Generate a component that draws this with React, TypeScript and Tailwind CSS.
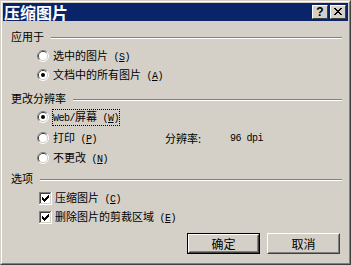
import React from 'react';

const cjk = "font-['Noto_Sans_CJK_SC',sans-serif]";
const mono = "font-['Liberation_Mono',monospace] text-[10px] tracking-[-0.5px]";

function Key({ k }: { k: string }) {
  return (
    <span className={mono}>
      {' ('}
      <span className="underline underline-offset-1">{k}</span>
      {')'}
    </span>
  );
}

function Radio({ checked }: { checked?: boolean }) {
  return (
    <svg width="12" height="12" viewBox="0 0 12 12" className="shrink-0">
      <path d="M2.11 9.89A5.5 5.5 0 0 1 9.89 2.11" fill="none" stroke="#808080" />
      <path d="M9.89 2.11A5.5 5.5 0 0 1 2.11 9.89" fill="none" stroke="#ffffff" />
      <path d="M2.82 9.18A4.5 4.5 0 0 1 9.18 2.82" fill="none" stroke="#404040" />
      <path d="M9.18 2.82A4.5 4.5 0 0 1 2.82 9.18" fill="none" stroke="#d4d0c8" />
      <circle cx="6" cy="6" r="4" fill="#ffffff" />
      {checked && <circle cx="6" cy="6" r="2" fill="#000000" />}
    </svg>
  );
}

function Check() {
  const runs = [2, 3, 4, 3, 2, 1, 0];
  return (
    <svg width="13" height="13" viewBox="0 0 13 13" className="shrink-0" shapeRendering="crispEdges">
      <rect x="0" y="0" width="13" height="13" fill="#ffffff" />
      <rect x="0" y="0" width="12" height="1" fill="#808080" />
      <rect x="0" y="0" width="1" height="12" fill="#808080" />
      <rect x="1" y="1" width="10" height="1" fill="#404040" />
      <rect x="1" y="1" width="1" height="10" fill="#404040" />
      <rect x="1" y="11" width="11" height="1" fill="#d4d0c8" />
      <rect x="11" y="1" width="1" height="11" fill="#d4d0c8" />
      <rect x="2" y="2" width="9" height="9" fill="#ffffff" />
      {runs.map((r, i) => (
        <rect key={i} x={3 + i} y={3 + r} width="1" height="3" fill="#000000" />
      ))}
    </svg>
  );
}

function Heading({ text, className }: { text: string; className?: string }) {
  return (
    <div className={`flex h-[16px] ${className ?? ''}`}>
      <span className="leading-[16px]">{text}</span>
      <div className="flex-1 ml-[7px] mt-[9px] h-[2px] border-t border-t-[#808080] border-b border-b-white" />
    </div>
  );
}

function Raised({ children, isDefault, className }: { children: React.ReactNode; isDefault?: boolean; className?: string }) {
  const inner = (
    <div className="h-full border border-t-white border-l-white border-r-[#404040] border-b-[#404040]">
      <div className="h-full border border-t-[#d4d0c8] border-l-[#d4d0c8] border-r-[#808080] border-b-[#808080] flex items-center justify-center">
        {children}
      </div>
    </div>
  );
  return (
    <div className={`${className ?? ''} ${isDefault ? 'border border-black' : ''}`}>
      {inner}
    </div>
  );
}

export default function App() {
  const xRows = [
    [0, 6], [1, 5], [2, 4], [3, 3], [2, 4], [1, 5], [0, 6],
  ];
  return (
    <div className={`w-[351px] h-[265px] border border-t-[#d4d0c8] border-l-[#d4d0c8] border-r-[#404040] border-b-[#404040] text-black ${cjk}`}>
      <div className="h-full border border-t-white border-l-white border-r-[#808080] border-b-[#808080] p-[1px] bg-[#d4d0c8] flex flex-col">
        {/* Title bar */}
        <div className="h-[18px] bg-[#0a246a] flex items-center pl-[1px] pr-[2px]">
          <span className="text-white font-bold text-[16px] leading-[18px]">压缩图片</span>
          <div className="ml-auto flex gap-[2px]">
            <div className="w-[16px] h-[14px] bg-[#d4d0c8] border border-t-white border-l-white border-r-[#404040] border-b-[#404040] flex items-center justify-center">
              <span className="font-['Liberation_Sans',sans-serif] font-bold text-[12px] leading-none">?</span>
            </div>
            <div className="w-[16px] h-[14px] bg-[#d4d0c8] border border-t-white border-l-white border-r-[#404040] border-b-[#404040]">
              <svg width="14" height="12" viewBox="0 0 14 12" shapeRendering="crispEdges">
                {xRows.map(([a, b], i) => (
                  <g key={i}>
                    <rect x={3 + a} y={2 + i} width="2" height="1" fill="#000" />
                    <rect x={3 + b} y={2 + i} width="2" height="1" fill="#000" />
                  </g>
                ))}
              </svg>
            </div>
          </div>
        </div>

        {/* Body */}
        <div className="flex-1 flex flex-col pl-[8px] pr-[6px] text-[11px]">
          <Heading text="应用于" className="mt-[7px]" />
          <div className="flex items-center h-[16px] mt-[4px] pl-[26px]">
            <Radio />
            <span className="ml-[3px] border border-transparent leading-[12px]">选中的图片<Key k="S" /></span>
          </div>
          <div className="flex items-center h-[16px] mt-[3px] pl-[26px]">
            <Radio checked />
            <span className="ml-[3px] border border-transparent leading-[12px]">文档中的所有图片<Key k="A" /></span>
          </div>

          <Heading text="更改分辨率" className="mt-[7px]" />
          <div className="flex items-center h-[16px] mt-[3px] pl-[26px]">
            <Radio checked />
            <span className="ml-[3px] border border-dotted border-black leading-[12px]">
              <span className={mono}>Web/</span>屏幕<Key k="W" />
            </span>
          </div>
          <div className="flex items-center h-[16px] mt-[5px]">
            <div className="w-[154px] flex items-center pl-[26px]">
              <Radio />
              <span className="ml-[3px] border border-transparent leading-[12px]">打印<Key k="P" /></span>
            </div>
            <span className="w-[65px]">分辨率:</span>
            <span className={mono}>96 dpi</span>
          </div>
          <div className="flex items-center h-[16px] mt-[4px] pl-[26px]">
            <Radio />
            <span className="ml-[3px] border border-transparent leading-[12px]">不更改<Key k="N" /></span>
          </div>

          <Heading text="选项" className="mt-[4px]" />
          <div className="flex items-center h-[16px] mt-[4px] pl-[28px]">
            <Check />
            <span className="ml-[2px] border border-transparent leading-[12px]">压缩图片<Key k="C" /></span>
          </div>
          <div className="flex items-center h-[16px] mt-[3px] pl-[28px]">
            <Check />
            <span className="ml-[2px] border border-transparent leading-[12px]">删除图片的剪裁区域<Key k="E" /></span>
          </div>

          <div className="flex justify-end gap-[7px] mt-[8px] pr-[2px] text-[12px]">
            <Raised isDefault className="w-[73px] h-[21px]">确定</Raised>
            <Raised className="w-[73px] h-[21px]">取消</Raised>
          </div>
        </div>
      </div>
    </div>
  );
}
